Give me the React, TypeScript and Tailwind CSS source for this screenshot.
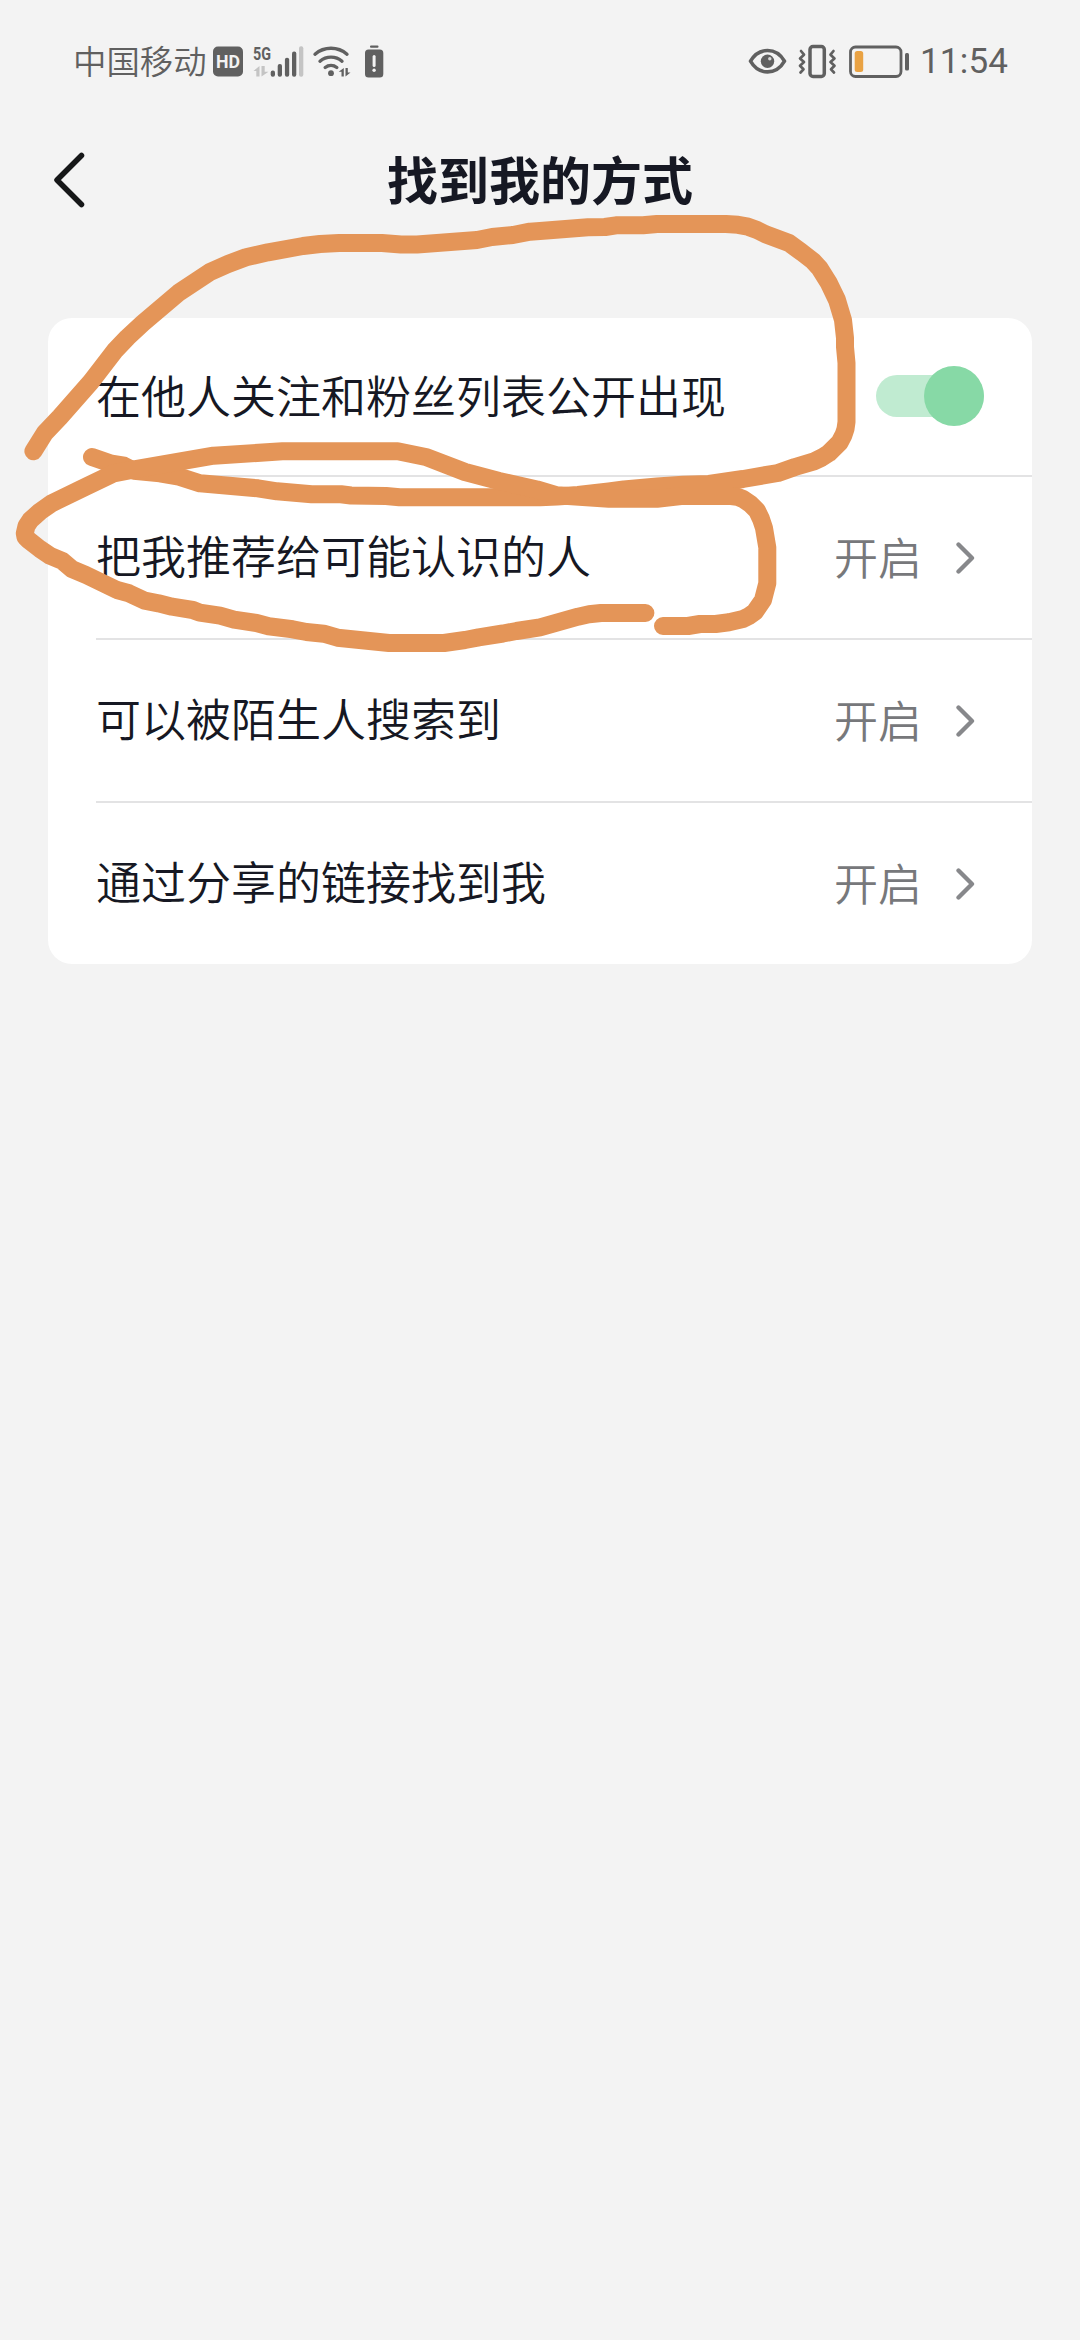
const rows = [
  { label: "把我推荐给可能认识的人", value: "开启" },
  { label: "可以被陌生人搜索到", value: "开启" },
  { label: "通过分享的链接找到我", value: "开启" },
]

function SignalIcons() {
  return (
    <svg className="h-[40px] w-[180px] shrink-0" viewBox="210 40.500 180 40" fill="none">
      {/* HD badge */}
      <rect x="213" y="46" width="30" height="30" rx="5" fill="#606060" />
      <text x="228" y="67.500" textAnchor="middle" textLength="24" lengthAdjust="spacingAndGlyphs" className="font-['Roboto',sans-serif] text-[19px] font-bold" fill="#f3f3f3">
        HD
      </text>
      {/* 5G */}
      <text x="253" y="59" textLength="18" lengthAdjust="spacingAndGlyphs" className="font-['Roboto',sans-serif] text-[18.500px] font-bold" fill="#606060">
        5G
      </text>
      <path d="M259.500 65.500v10.500h-3.200v-5.500h-2.800zM261.500 65.500h3.200v5.800h3.800l-7 4.700z" fill="#c4c4c4" />
      <g fill="#606060">
        <rect x="270.700" y="70" width="4.300" height="6.300" rx="2" />
        <rect x="277.700" y="63.500" width="4.300" height="12.800" rx="2" />
        <rect x="284.900" y="57.300" width="4.300" height="19" rx="2" />
        <rect x="292" y="51" width="4.300" height="25.300" rx="2" />
      </g>
      <rect x="299" y="45.700" width="4.300" height="30.600" rx="2" fill="#c4c4c4" />
      {/* Wi-Fi */}
      <g stroke="#606060" strokeWidth="3.400" strokeLinecap="round">
        <path d="M315 53.700a24.500 24.500 0 0 1 32 0" />
        <path d="M320 60.700a17 17 0 0 1 22 0" />
        <path d="M325.200 67a9.500 9.500 0 0 1 11.600 0" />
      </g>
      <circle cx="331" cy="72.700" r="2.900" fill="#606060" />
      <path d="M343.800 67.500v8.500h-2.300v-4.800h-2.800zM345.500 67.500h2.300v4.500h2.700l-5 4z" fill="#606060" />
      {/* Battery warning */}
      <rect x="370" y="45" width="8.500" height="2.200" rx="1" fill="#606060" />
      <rect x="365" y="49" width="18.300" height="28" rx="3.500" fill="#606060" />
      <path d="M374.100 56v9" stroke="#f3f3f3" strokeWidth="3" strokeLinecap="round" />
      <circle cx="374.100" cy="69.700" r="1.700" fill="#f3f3f3" />
    </svg>
  )
}

function DeviceIcons() {
  return (
    <svg className="h-[40px] w-[166px] shrink-0" viewBox="745 41 166 40" fill="none" stroke="#606060">
      {/* Eye */}
      <path d="M750.500 61.200c4-7 10-10.700 17-10.700s13 3.700 17 10.700c-4 7-10 10.700-17 10.700s-13-3.700-17-10.700z" strokeWidth="3.600" strokeLinejoin="round" />
      <circle cx="767.500" cy="61.200" r="6.700" fill="#606060" stroke="none" />
      <circle cx="769.800" cy="58.800" r="1.700" fill="#d8d8d8" stroke="none" />
      {/* Vibrate */}
      <rect x="810" y="46.500" width="14.300" height="30" rx="3" strokeWidth="3.500" />
      <path d="M801 51l3 3.700-4 3.700 4 3.700-4 3.700 3.500 3.500-3 3.200" strokeWidth="2.700" strokeLinecap="round" strokeLinejoin="round" />
      <path d="M833.500 51l-3 3.700 4 3.700-4 3.700 4 3.700-3.500 3.500 3 3.200" strokeWidth="2.700" strokeLinecap="round" strokeLinejoin="round" />
      {/* Battery */}
      <rect x="850.500" y="47" width="50.500" height="29.500" rx="5" strokeWidth="2.800" />
      <rect x="854.700" y="51" width="8.500" height="21" rx="2.500" fill="#e9a243" stroke="none" />
      <rect x="905" y="53" width="4" height="17.500" rx="1.500" fill="#606060" stroke="none" />
    </svg>
  )
}

function Chevron() {
  return (
    <svg className="h-[34px] w-[20px]" viewBox="0 0 20 34" fill="none" stroke="#87888b" strokeWidth="4.300" strokeLinecap="round" strokeLinejoin="round">
      <path d="M3.500 3.500L17 17 3.500 30.500" />
    </svg>
  )
}

// Hand-drawn marker strokes over the first two rows
function Scribble() {
  return (
    <svg className="pointer-events-none absolute top-0 left-0 h-[700px] w-[1080px]" viewBox="0 0 1080 700" fill="none" stroke="#e49558" strokeWidth="18" strokeLinecap="round" strokeLinejoin="round">
      <path d="M33.400 451.300L44.800 433 60 417 91 381.700 115 350.500 127.400 337.500 143 323 179 292.500 210 272 228 264 246 257.300 268 252.300 303 246 320 244 339 243H382L401 244.500H417L477 240 492 237 513 235 530 231.700 540 231 588 227.300 605 227 616 225.300H643L657 224H726L738 224.800 748 226.700 757 230 765.500 234.300 789 243 802 252.500 813 261 819.600 268.300 829 283.300 837 300 843 320 845 338V347L846.500 363V422L845.500 429 843.500 435 839.600 442.500 829 453 822 457.500 814 461.300 795 467 778 473 743 479 709 484 683 484.700 657 486.500 624 489.500 609 491.500 578 495 557 496.500 540 497.300H399.500L386 496 351 495.500 341 494.300H311.600L277 491.300 258 488.300 200 483.300 179 476.700 160 473.300 134 470.700 124 465.700 110 463.300 92 457" />
      <path d="M645.400 613H601L589 614.300 578 616.700 540 627.300 516.500 631 503 633.500 478.700 637.300 465 640 444 643H389L337.500 637.700 323.700 633.700 306.500 632 292.700 629.300 268.600 626.300 256.500 623 234 619.700 220 615.700 199.700 612.700 192.800 610 172 606.700 158.400 603.300 144.600 600.700 129 593.300 117 590 86 575 72.300 569.300 62 560.700 50 555.700 40 549 29.300 540.700 25.500 537 24.800 533.300 26.500 526 30.500 520 40 511.500 51.600 503.300 86 486.700 113.600 473.300 134.300 469.300 213.500 455.700 282.400 451.300H397.700L427 457.300 465 472 499 481 537 489.500 557 495.300 609 498.700H657L681 496H731L737 496.700 743 499 750 503.700 757 510.700 761 519 764 528 767.300 547.500V583.300L763 600 755 611.700 749 616 743 619 729 622.300 715.600 624H700L688 626H663" />
    </svg>
  )
}

export default function App() {
  return (
    <div className="relative h-[2340px] w-[1080px] overflow-hidden bg-[#f3f3f3] font-['Noto_Sans_CJK_SC',sans-serif]">
      {/* Status bar */}
      <div className="flex h-[122px] items-center justify-between pr-[70px] pl-[73px]">
        <div className="flex items-center gap-[2px]">
          <span className="w-[135px] pb-[2px] font-['Noto_Sans_CJK_SC_DemiLight','Noto_Sans_CJK_SC',sans-serif] text-[33.400px] leading-[40px] font-[350] whitespace-nowrap text-[#606060]">中国移动</span>
          <SignalIcons />
        </div>
        <div className="flex items-center gap-[9px]">
          <DeviceIcons />
          <span className="w-[90px] pt-[2px] font-['Roboto',sans-serif] text-[35px] leading-[40px] tracking-[0.2px] whitespace-nowrap text-[#606060]">11:54</span>
        </div>
      </div>

      {/* Title bar */}
      <header className="grid h-[116px] grid-cols-[80px_1fr_80px] items-center px-[48px]">
        <button className="flex" aria-label="返回">
          <svg className="h-[60px] w-[42px]" viewBox="48 150 42 60" fill="none" stroke="#161718" strokeWidth="5.500" strokeLinecap="round" strokeLinejoin="round">
            <path d="M81.500 155.500L57 180l24.500 24.500" />
          </svg>
        </button>
        <h1 className="pb-[5px] text-center text-[51px] leading-[60px] font-bold text-[#161823]">找到我的方式</h1>
      </header>

      <section className="mx-[48px] mt-[80px] rounded-[24px] bg-white">
        <div className="flex h-[157px] items-center justify-between px-[48px]">
          <span className="pb-[3px] font-['Noto_Sans_CJK_SC_DemiLight','Noto_Sans_CJK_SC',sans-serif] text-[45px] leading-[60px] font-[350] text-[#161823]">在他人关注和粉丝列表公开出现</span>
          <div role="switch" aria-checked="true" className="mb-px flex h-[42px] w-[108px] items-center justify-end rounded-full bg-[#c0ebd1]">
            <div className="size-[60px] shrink-0 rounded-full bg-[#87d9a6]" />
          </div>
        </div>
        {rows.map((row) => (
          <div key={row.label} className="ml-[48px] flex h-[163px] items-center justify-between border-t-2 border-[#e3e3e4] pr-[57px] font-['Noto_Sans_CJK_SC_DemiLight','Noto_Sans_CJK_SC',sans-serif] font-[350]">
            <span className="pb-[6px] text-[45px] leading-[60px] text-[#161823]">{row.label}</span>
            <div className="flex items-center gap-[33px]">
              <span className="pb-[3px] text-[44px] leading-[60px] text-[#77787b]">{row.value}</span>
              <Chevron />
            </div>
          </div>
        ))}
      </section>

      <Scribble />
    </div>
  )
}
